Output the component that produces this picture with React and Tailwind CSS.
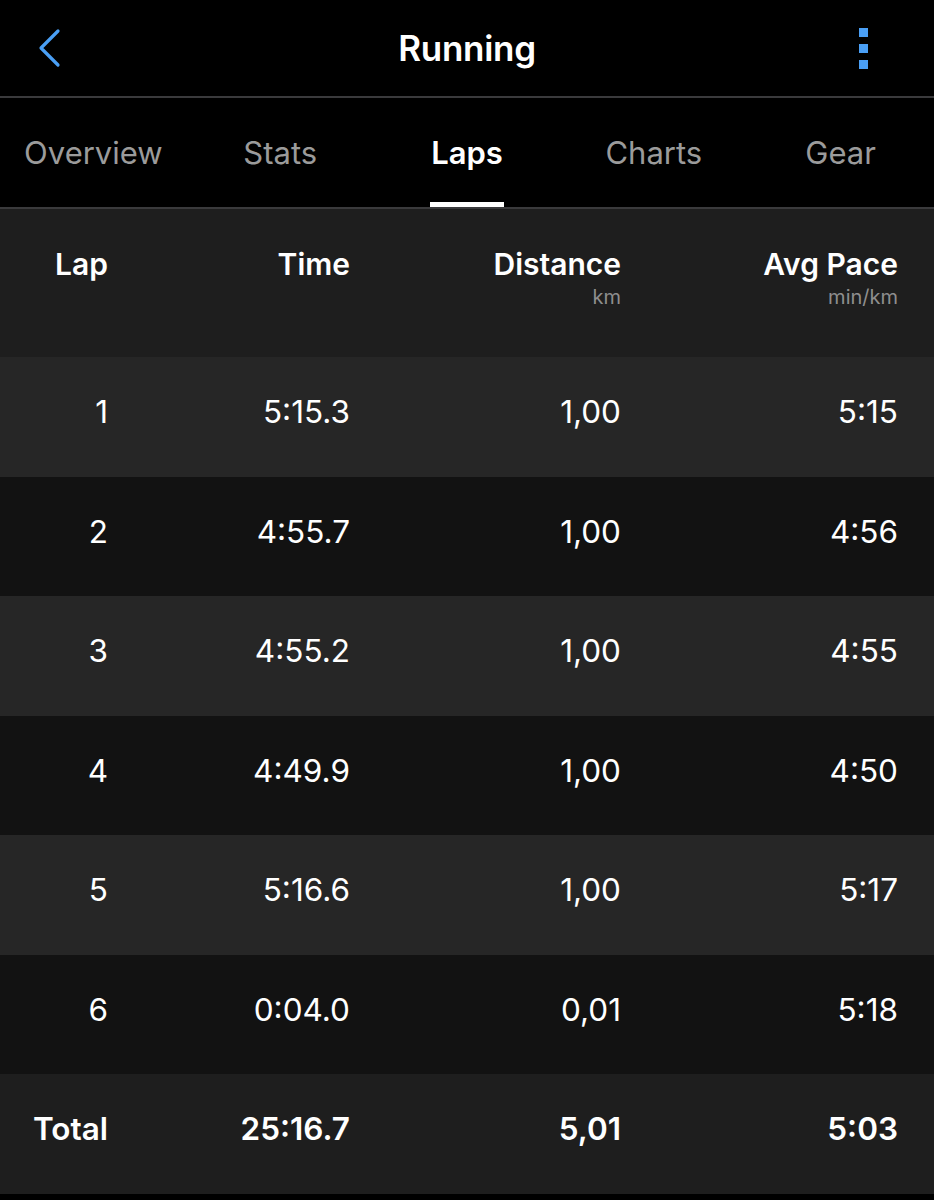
import React from 'react'

const laps = [
    { lap: '1', time: '5:15.3', dist: '1,00', pace: '5:15' },
    { lap: '2', time: '4:55.7', dist: '1,00', pace: '4:56' },
    { lap: '3', time: '4:55.2', dist: '1,00', pace: '4:55' },
    { lap: '4', time: '4:49.9', dist: '1,00', pace: '4:50' },
    { lap: '5', time: '5:16.6', dist: '1,00', pace: '5:17' },
    { lap: '6', time: '0:04.0', dist: '0,01', pace: '5:18' },
]

const tabs = ['Overview', 'Stats', 'Laps', 'Charts', 'Gear']

const cols = "grid grid-cols-[108px_242px_271px_277px] pr-[36px] text-right"

const App = () => {
    return (
        <div className="w-[934px] h-[1200px] bg-black text-white font-['Inter',sans-serif] overflow-hidden">
            {/* top bar */}
            <div className="h-[96px] flex items-center justify-between px-[36px] relative">
                <svg width="26" height="40" viewBox="0 0 26 40" className="ml-[1px]">
                    <path d="M21 3 L4 20 L21 37" fill="none" stroke="#4a9ff5" strokeWidth="3.2" strokeLinecap="round" strokeLinejoin="round" />
                </svg>
                <div className="absolute left-0 right-0 text-center text-[35px] font-semibold tracking-[-0.3px] pointer-events-none">
                    Running
                </div>
                <div className="flex flex-col gap-[7px] mr-[30px]">
                    <div className="w-[9px] h-[9px] bg-[#4a9ff5]"></div>
                    <div className="w-[9px] h-[9px] bg-[#4a9ff5]"></div>
                    <div className="w-[9px] h-[9px] bg-[#4a9ff5]"></div>
                </div>
            </div>
            <div className="h-[2px] bg-[#3a3a3c]"></div>

            {/* tabs */}
            <div className="flex h-[109px]">
                {tabs.map((t) => (
                    <div key={t} className="flex-1 flex flex-col items-center justify-end">
                        <div className={"text-[31px] leading-none mb-[34px] " + (t === 'Laps' ? "text-white font-semibold" : "text-[#9b9b9b]")}>
                            {t}
                        </div>
                        <div className={"h-[5px] w-[74px] " + (t === 'Laps' ? "bg-white" : "bg-transparent")}></div>
                    </div>
                ))}
            </div>
            <div className="h-[2px] bg-[#3a3a3c]"></div>

            {/* table header */}
            <div className={cols + " h-[148px] bg-[#1e1e1e] pt-[35px]"}>
                <div className="text-[30px] font-semibold leading-[40px]">Lap</div>
                <div className="text-[30px] font-semibold leading-[40px]">Time</div>
                <div>
                    <div className="text-[30px] font-semibold leading-[40px]">Distance</div>
                    <div className="text-[20px] text-[#8e8e8e] leading-[26px]">km</div>
                </div>
                <div>
                    <div className="text-[30px] font-semibold leading-[40px]">Avg Pace</div>
                    <div className="text-[20px] text-[#8e8e8e] leading-[26px]">min/km</div>
                </div>
            </div>

            {/* rows */}
            {laps.map((r, i) => (
                <div key={r.lap} className={cols + " h-[119.5px] items-center pb-[10px] text-[31.5px] " + (i % 2 === 0 ? "bg-[#262626]" : "bg-[#121212]")}>
                    <div>{r.lap}</div>
                    <div>{r.time}</div>
                    <div>{r.dist}</div>
                    <div>{r.pace}</div>
                </div>
            ))}

            {/* total */}
            <div className={cols + " h-[120px] items-center pb-[10px] text-[31.5px] font-semibold bg-[#1e1e1e]"}>
                <div>Total</div>
                <div>25:16.7</div>
                <div>5,01</div>
                <div>5:03</div>
            </div>
        </div>
    )
}

export default App
